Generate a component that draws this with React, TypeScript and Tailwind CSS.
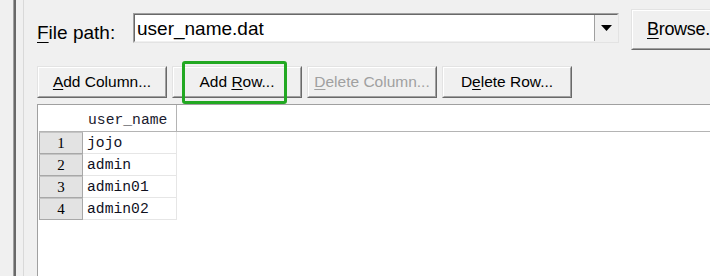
import React from "react";

function Btn({ children, disabled }: { children: React.ReactNode; disabled?: boolean }) {
  return (
    <div className="h-[32px] w-[130px] shrink-0 border border-t-[#e3e3e3] border-l-[#e3e3e3] border-r-[#696969] border-b-[#696969]">
      <div
        className={
          disabled
            ? "h-full border border-t-white border-l-white border-r-[#a0a0a0] border-b-[#a0a0a0] bg-[#f0f0f0] flex items-center justify-center text-[15.5px] text-[#a0a0a0]"
            : "h-full border border-t-white border-l-white border-r-[#a0a0a0] border-b-[#a0a0a0] bg-[#f0f0f0] flex items-center justify-center text-[15.5px] text-black"
        }
      >
        {children}
      </div>
    </div>
  );
}

const rows = ["jojo", "admin", "admin01", "admin02"];

export default function App() {
  return (
    <div className="w-[710px] h-[276px] overflow-hidden bg-[#f0f0f0] flex font-['Liberation_Sans',Arial,sans-serif]">
      <div className="w-[13px] shrink-0" />
      <div className="w-px shrink-0 bg-[#a0a0a0]" />
      <div className="w-[2px] shrink-0 bg-[#696969]" />
      <div className="w-[7px] shrink-0" />
      <div className="w-px shrink-0 bg-[#d9d9d9]" />
      <div className="flex-1 min-w-0 pl-[13px] flex flex-col">
        {/* top row */}
        <div className="flex items-start h-[50px] shrink-0">
          <div className="mt-[22px] leading-[22px] text-[19px] w-[96px] shrink-0 text-black">
            <span className="underline underline-offset-[3px]">F</span>ile path:
          </div>
          <div className="mt-[13px] w-[486px] h-[30px] shrink-0 flex border border-t-[#a0a0a0] border-l-[#a0a0a0] border-r-[#e3e3e3] border-b-[#e3e3e3]">
            <div className="flex-1 flex border border-t-[#696969] border-l-[#696969] border-r-[#f0f0f0] border-b-[#f0f0f0] bg-white">
              <div className="flex-1 flex items-center pl-[2px] text-[19px] leading-none text-black">user_name.dat</div>
              <div className="w-[23px] h-full border-l border-[#a0a0a0] bg-[#f0f0f0] flex items-center justify-center">
                <svg width="11" height="6" viewBox="0 0 11 6">
                  <path d="M0 0 H11 L5.5 6 Z" fill="#000" />
                </svg>
              </div>
            </div>
          </div>
          <div className="ml-[12px] mt-[9px] h-[41px] w-[100px] shrink-0 border border-t-[#e3e3e3] border-l-[#e3e3e3] border-r-[#696969] border-b-[#696969]">
            <div className="h-full border border-t-white border-l-white border-r-[#a0a0a0] border-b-[#a0a0a0] bg-[#f0f0f0] flex items-center pl-[14px] text-[18px] tracking-[-0.3px] text-black whitespace-nowrap">
              <span className="underline underline-offset-[3px]">B</span>rowse...
            </div>
          </div>
        </div>

        {/* buttons row */}
        <div className="mt-[16px] flex gap-[5px] shrink-0">
          <Btn>
            <span className="underline underline-offset-2">A</span>dd Column...
          </Btn>
          <div className="relative">
            <Btn>
              <span>
                Add <span className="underline underline-offset-2">R</span>ow...
              </span>
            </Btn>
            <div className="absolute left-[10px] -top-[5px] w-[105px] h-[43px] border-[3px] border-[#22a822] rounded-[3px]" />
          </div>
          <Btn disabled>
            <span className="underline underline-offset-2">D</span>elete Column...
          </Btn>
          <Btn>
            D<span className="underline underline-offset-2">e</span>lete Row...
          </Btn>
        </div>

        {/* table */}
        <div className="mt-[6px] flex-1 bg-white border-t border-l border-[#a0a0a0] pl-[1px] flex flex-col">
          <div className="h-[27px] flex border-b border-[#b4b4b4] shrink-0">
            <div className="w-[44px] shrink-0" />
            <div className="w-[94px] shrink-0 border-r border-[#b4b4b4] flex items-center pl-[5px] pt-[4px] font-['Liberation_Mono',monospace] text-[14.7px] text-[#1a1a2e]">
              user_name
            </div>
          </div>
          {rows.map((r, i) => (
            <div key={r} className="h-[22px] flex shrink-0">
              <div className="w-[44px] shrink-0 border border-[#a8a8a8] border-t-[#c4c4c4] bg-[#e3e3e3] flex items-center justify-center font-['Liberation_Serif',serif] text-[15px] text-black">
                {i + 1}
              </div>
              <div className="w-[94px] shrink-0 border-r border-b border-[#e6e6e6] flex items-center pl-[4px] pt-[2px] font-['Liberation_Mono',monospace] text-[14.7px] text-[#10101e]">
                {r}
              </div>
            </div>
          ))}
        </div>
      </div>
    </div>
  );
}
